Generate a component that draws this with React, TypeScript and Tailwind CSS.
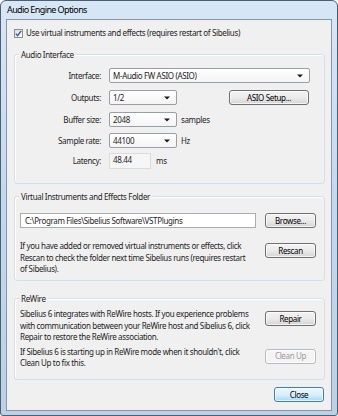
const font = "font-['Noto_Sans','Open_Sans',sans-serif]";

const Combo = ({ value, width }: { value: string; width: string }) => (
  <div
    className={`${width} h-[15px] flex items-center justify-between border border-[#9a9ea5] rounded-[2px] bg-gradient-to-b from-white to-[#f4f4f4] pl-[3px] pr-[6px]`}
  >
    <span className="leading-none">{value}</span>
    <svg width="6" height="4" viewBox="0 0 6 4">
      <path d="M0 0.5H6L3 3.5Z" fill="#1a1a1a" />
    </svg>
  </div>
);

const Button = ({
  label,
  width,
  disabled,
  primary,
}: {
  label: string;
  width: string;
  disabled?: boolean;
  primary?: boolean;
}) => {
  let cls =
    "border-[#707070] bg-gradient-to-b from-[#f3f3f3] via-[#ebebeb] to-[#d4d4d4] text-black";
  if (disabled) cls = "border-[#b9bcbf] bg-[#f4f4f4] text-[#9a9a9a]";
  if (primary)
    cls =
      "border-[#3c7fb1] bg-gradient-to-b from-[#eaf6fd] via-[#d9f0fc] to-[#a7d9f5] text-black";
  return (
    <div
      className={`${width} h-[15px] flex items-center justify-center rounded-[3px] border ${cls} shadow-[inset_0_0_0_1px_rgba(255,255,255,0.7)] leading-none`}
    >
      {label}
    </div>
  );
};

const Group = ({
  title,
  className,
  children,
}: {
  title: string;
  className: string;
  children: React.ReactNode;
}) => (
  <div
    className={`relative border border-[#d5dfe5] rounded-[3px] shadow-[inset_1px_1px_0_#ffffff] ${className}`}
  >
    <span className="absolute -top-[6px] left-[4px] bg-[#f0f0f0] px-[2px] leading-[11px]">
      {title}
    </span>
    {children}
  </div>
);

const Label = ({ text }: { text: string }) => (
  <span className="w-[94px] text-right pr-[8px] leading-none">{text}</span>
);

export default function App() {
  return (
    <div
      className={`w-[338px] h-[416px] bg-white ${font} text-[8px] tracking-[-0.35px] text-[#1e1e1e]`}
    >
      <div className="w-full h-full flex flex-col rounded-t-[6px] rounded-b-[3px] border border-[#4c5f74] bg-gradient-to-b from-[#d8e7f6] via-[#c3d8ee] to-[#bcd1e6]">
        <div className="h-[18px] flex items-center pl-[6px] text-[9px] tracking-[-0.6px] text-black">
          Audio Engine Options
        </div>
        <div className="flex-1 mx-[5px] mb-[4px] border border-[#8797a8] bg-[#f0f0f0] pl-[7px] pr-[6px] flex flex-col">
          <div className="mt-[8px] h-[10px] flex items-center gap-[3px]">
            <div className="w-[9px] h-[9px] border border-[#8e8f8f] bg-gradient-to-br from-[#dcdcdc] to-white flex items-center justify-center">
              <svg width="7" height="7" viewBox="0 0 7 7">
                <path d="M0.8 3.6L2.6 5.6L6.2 0.8" stroke="#3a5a9e" strokeWidth="1.4" fill="none" />
              </svg>
            </div>
            <span className="leading-none">
              Use virtual instruments and effects (requires restart of Sibelius)
            </span>
          </div>

          <Group title="Audio Interface" className="mt-[16px] h-[130px] pt-[13px]">
            <div className="flex items-center h-[15px]">
              <Label text="Interface:" />
              <Combo value="M-Audio FW ASIO (ASIO)" width="w-[201px]" />
            </div>
            <div className="flex items-center h-[15px] mt-[7px]">
              <Label text="Outputs:" />
              <Combo value="1/2" width="w-[68px]" />
              <div className="ml-[52px]">
                <Button label="ASIO Setup..." width="w-[80px]" />
              </div>
            </div>
            <div className="flex items-center h-[15px] mt-[7px]">
              <Label text="Buffer size:" />
              <Combo value="2048" width="w-[68px]" />
              <span className="ml-[4px] leading-none">samples</span>
            </div>
            <div className="flex items-center h-[15px] mt-[6px]">
              <Label text="Sample rate:" />
              <Combo value="44100" width="w-[68px]" />
              <span className="ml-[4px] leading-none">Hz</span>
            </div>
            <div className="flex items-center h-[16px] mt-[5px]">
              <Label text="Latency:" />
              <div className="w-[42px] h-[16px] border border-[#dcdcdc] bg-[#f6f6f6] pl-[3px] pt-[2px] leading-none">
                48.44
              </div>
              <span className="ml-[5px] leading-none">ms</span>
            </div>
          </Group>

          <Group
            title="Virtual Instruments and Effects Folder"
            className="mt-[12px] h-[85px] pl-[5px] pr-[8px] pt-[16px]"
          >
            <div className="flex items-center justify-between h-[15px]">
              <div className="w-[236px] h-[15px] border border-[#abadb3] bg-white pl-[4px] flex items-center leading-none">
                C:\Program Files\Sibelius Software\VSTPlugins
              </div>
              <Button label="Browse..." width="w-[51px]" />
            </div>
            <div className="flex justify-between mt-[12px]">
              <p className="whitespace-nowrap leading-[11.5px]">
                If you have added or removed virtual instruments or effects, click
                <br />
                Rescan to check the folder next time Sibelius runs (requires restart
                <br />
                of Sibelius).
              </p>
              <div className="mt-[3px]">
                <Button label="Rescan" width="w-[51px]" />
              </div>
            </div>
          </Group>

          <Group title="ReWire" className="mt-[17px] h-[82px] pl-[5px] pr-[8px] pt-[9px]">
            <div className="flex justify-between">
              <p className="whitespace-nowrap leading-[11.5px]">
                Sibelius 6 integrates with ReWire hosts. If you experience problems
                <br />
                with communication between your ReWire host and Sibelius 6, click
                <br />
                Repair to restore the ReWire association.
              </p>
              <div className="mt-[3px]">
                <Button label="Repair" width="w-[51px]" />
              </div>
            </div>
            <div className="flex justify-between mt-[3px]">
              <p className="whitespace-nowrap leading-[11.5px]">
                If Sibelius 6 is starting up in ReWire mode when it shouldn't, click
                <br />
                Clean Up to fix this.
              </p>
              <div className="mt-[3px]">
                <Button label="Clean Up" width="w-[51px]" disabled />
              </div>
            </div>
          </Group>

          <div className="flex justify-end mt-[7px] pr-[1px]">
            <Button label="Close" width="w-[50px]" primary />
          </div>
        </div>
      </div>
    </div>
  );
}
